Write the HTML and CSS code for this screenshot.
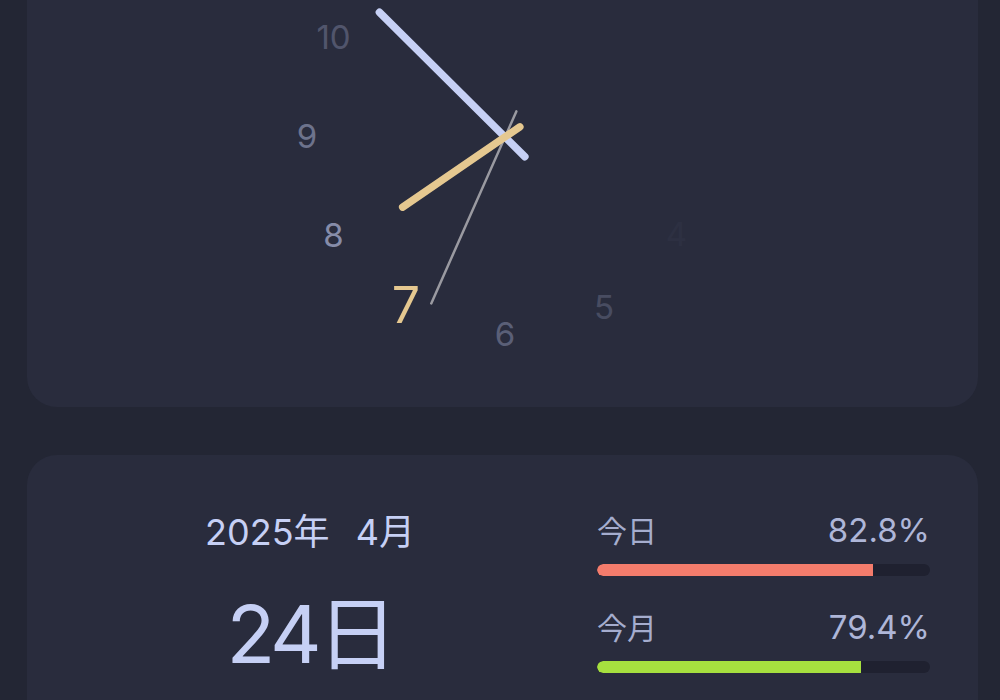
FILE: index.html
```html
<!DOCTYPE html>
<html lang="ja">
<head>
<meta charset="utf-8">
<title>Clock</title>
<link rel="stylesheet" href="styles.css">
</head>
<body>
<main class="page">
  <section class="card clock-card">
    <svg class="clock" width="480" height="480" viewBox="0 0 480 480">
      <g class="numbers">
        <text x="413.5" y="337" opacity="0.03">4</text>
        <text x="341" y="410" opacity="0.25">5</text>
        <text x="242" y="437" opacity="0.4">6</text>
        <text class="current" x="143" y="408">7</text>
        <text x="70.5" y="338" opacity="0.75">8</text>
        <text x="44" y="239" opacity="0.55">9</text>
        <text x="70.5" y="140" opacity="0.32">10</text>
      </g>
      <g class="hands" transform="translate(242 240)">
        <line class="hand-second" x1="0" y1="28" x2="0" y2="-182" transform="rotate(203.9)"/>
        <line class="hand-minute" x1="0" y1="28" x2="0" y2="-177" transform="rotate(314.8)"/>
        <line class="hand-hour" x1="0" y1="18" x2="0" y2="-124" transform="rotate(235.6)"/>
      </g>
    </svg>
  </section>

  <section class="card date-card">
    <div class="date">
      <div class="ym"><span>2025年</span><span>4月</span></div>
      <div class="day">24日</div>
    </div>
    <div class="progress">
      <div class="row">
        <div class="row-head"><span class="label">今日</span><span class="value">82.8%</span></div>
        <div class="track"><div class="fill fill-day" style="width:82.8%"></div></div>
      </div>
      <div class="row">
        <div class="row-head"><span class="label">今月</span><span class="value">79.4%</span></div>
        <div class="track"><div class="fill fill-month" style="width:79.4%"></div></div>
      </div>
    </div>
  </section>
</main>
</body>
</html>
```

FILE: styles.css
```css
html, body {
  margin: 0;
  padding: 0;
  background: #232634;
  height: 100%;
  overflow: hidden;
}

body {
  font-family: "Inter", "Noto Sans CJK JP", sans-serif;
  color: #c6d0f5;
}

.page {
  display: flex;
  flex-direction: column;
  gap: 48px;
  padding: 0 22px 0 27px;
}

.card {
  background: #292c3d;
  border-radius: 30px;
}

.clock-card {
  margin-top: -103px;
  height: 510px;
  display: flex;
  justify-content: center;
}

.clock {
  display: block;
  overflow: visible;
}

.numbers text {
  font-family: "Inter", "Noto Sans CJK JP", sans-serif;
  font-size: 33px;
  fill: #a5adce;
  text-anchor: middle;
  dominant-baseline: central;
}

.numbers text.current {
  font-size: 50px;
  fill: #e5c890;
}

.hands line {
  stroke-linecap: round;
}

.hand-second {
  stroke: #9a9aa1;
  stroke-width: 2.5;
}

.hand-minute {
  stroke: #c6d0f5;
  stroke-width: 7.5;
}

.hand-hour {
  stroke: #e5c890;
  stroke-width: 7.5;
}

.date-card {
  display: flex;
  gap: 51px;
  padding: 55px 48px 60px 47px;
  height: 400px;
}

.date {
  flex: 1;
  display: flex;
  flex-direction: column;
  align-items: center;
  gap: 35px;
}

.ym {
  font-size: 36px;
  line-height: 44px;
  display: flex;
  gap: 26px;
}

.day {
  font-size: 80px;
  line-height: 90px;
  letter-spacing: -4px;
}

.progress {
  width: 333px;
  display: flex;
  flex-direction: column;
  gap: 31px;
}

.row-head {
  display: flex;
  justify-content: space-between;
  align-items: baseline;
  line-height: 40px;
  color: #a5adce;
}

.label {
  font-size: 30px;
}

.value {
  font-size: 33px;
  color: #aeb6d8;
}

.track {
  margin-top: 13px;
  height: 12px;
  border-radius: 6px;
  background: #1f2130;
  overflow: hidden;
}

.fill {
  height: 100%;
  border-radius: 6px 0 0 6px;
}

.fill-day {
  background: #f47c6c;
}

.fill-month {
  background: #a6e03f;
}
```
